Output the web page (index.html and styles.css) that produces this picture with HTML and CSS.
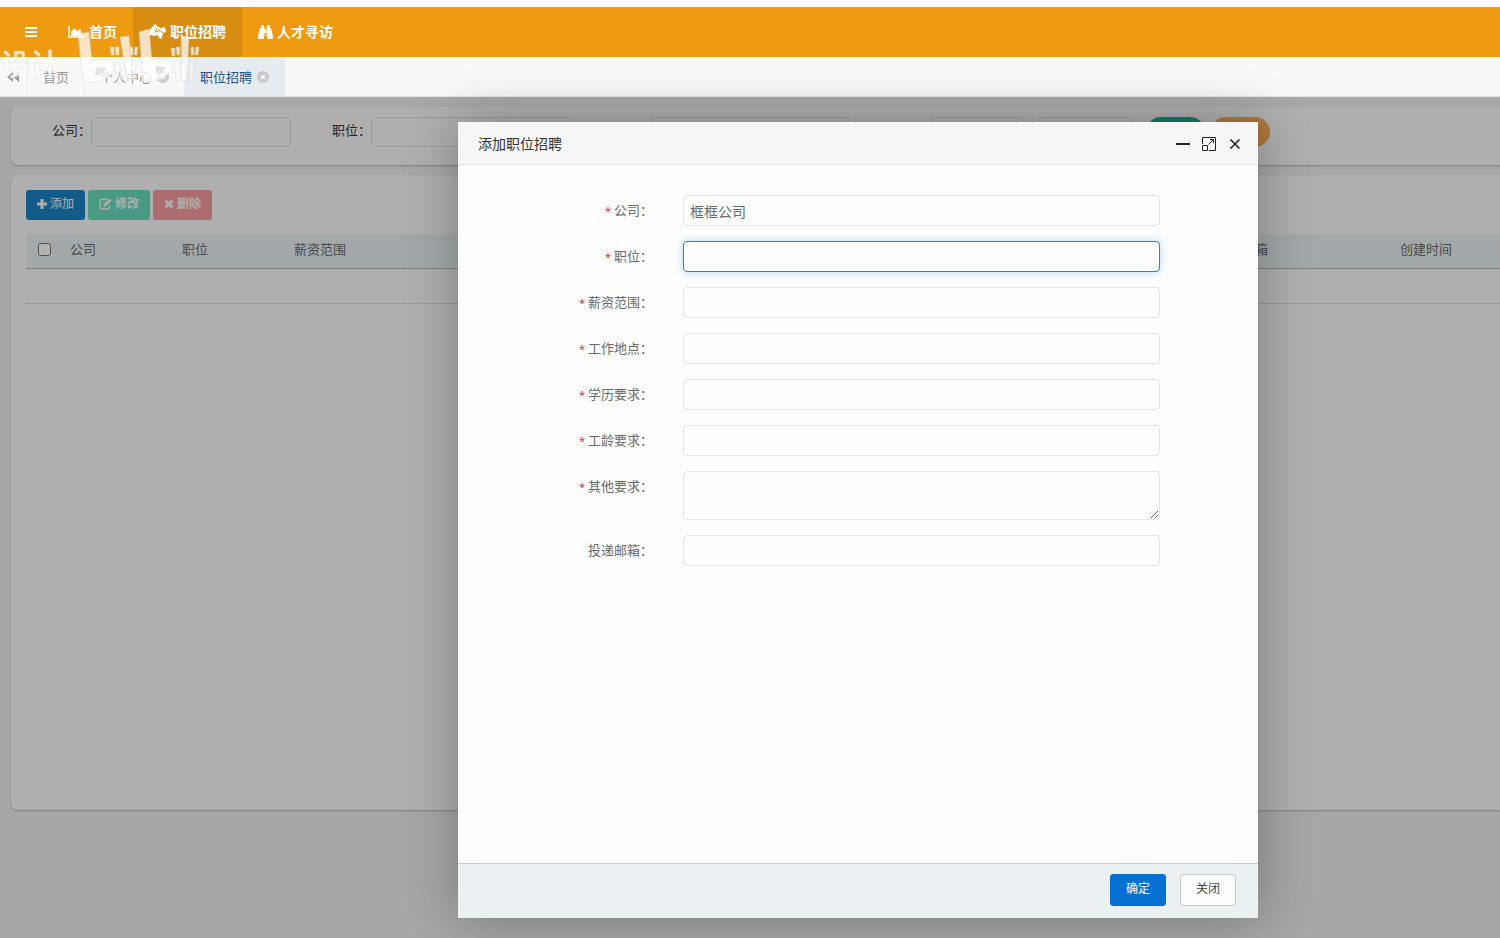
FILE: index.html
```html
<!DOCTYPE html>
<html lang="zh-CN">
<head>
<meta charset="utf-8">
<title>职位招聘</title>
<link rel="stylesheet" href="styles.css">
</head>
<body>
<header class="topbar">
  <button class="menu-toggle" type="button" aria-label="菜单">
    <svg width="13" height="12" viewBox="0 0 13 12"><path d="M1 2h12M1 6h12M1 10h12" stroke="currentColor" stroke-width="2"/></svg>
  </button>
  <nav class="main-nav">
    <a class="nav-item" href="#home">
      <svg width="17" height="14" viewBox="0 0 17 14"><path d="M1 1v11h15" fill="none" stroke="currentColor" stroke-width="1.4"/><path d="M3 11V7l3-4 3 3 3-2 3 7z" fill="currentColor"/></svg>
      首页</a>
    <a class="nav-item active" href="#jobs">
      <svg width="17" height="16" viewBox="0 0 17 16"><path d="M3 3l3-3 3 3 3 1 4-1 1 5-3 1-1 5-2 1-3-4-3 1-3-1-3 2-2-3 3-3z" fill="currentColor"/><path d="M8 4L6 7l2 1 2-2 4 3" fill="none" stroke="#d78c12" stroke-width="1"/></svg>
      职位招聘</a>
    <a class="nav-item" href="#talent">
      <svg width="15" height="14" viewBox="0 0 15 14"><path d="M3 0h3v2h.5v9.500H6V14H0v-3L2 3h1zM12 0H9v2h-.5v9.500H9V14h6v-3L13 3h-1zM6 4h3v4H6z" fill="currentColor"/></svg>
      人才寻访</a>
  </nav>
</header>
<div class="tabs">
  <button class="tab-scroll" type="button" aria-label="向左滚动">
    <svg width="12" height="10" viewBox="0 0 12 10"><path d="M6 0v10L0 5zM12 0v10L6 5z" fill="currentColor"/></svg>
  </button>
  <a class="tab" href="#home">首页</a>
  <a class="tab tab-wide" href="#profile">个人中心
    <svg width="12" height="12" viewBox="0 0 12 12"><circle cx="6" cy="6" r="6" fill="#ccc"/><path d="M4 4l4 4M8 4l-4 4" stroke="#fff" stroke-width="1.500"/></svg></a>
  <a class="tab tab-wide active" href="#jobs">职位招聘
    <svg width="12" height="12" viewBox="0 0 12 12"><circle cx="6" cy="6" r="6" fill="#c3c9cc"/><path d="M4 4l4 4M8 4l-4 4" stroke="#fff" stroke-width="1.500"/></svg></a>
</div>
<main class="content">
  <form class="panel search">
    <label class="field">公司：<input class="search-input" type="text"></label>
    <label class="field">职位：<input class="search-input" type="text"></label>
    <input class="search-input third" type="text" aria-label="工作地点">
    <span class="range">
      <input class="search-input date" type="text" aria-label="开始时间">
      <input class="search-input date" type="text" aria-label="结束时间">
    </span>
    <span class="range actions">
      <button class="pill green" type="button" aria-label="搜索"></button>
      <button class="pill orange" type="button" aria-label="重置"></button>
    </span>
  </form>
  <section class="panel list">
    <div class="toolbar">
      <button class="tool blue" type="button"><svg width="10" height="10" viewBox="0 0 10 10"><path d="M5 0v10M0 5h10" stroke="currentColor" stroke-width="3"/></svg>添加</button>
      <button class="tool teal" type="button"><svg width="13" height="12" viewBox="0 0 13 12"><path d="M8 1.500H2.500a1.500 1.500 0 0 0-1.500 1.500v6.500A1.500 1.500 0 0 0 2.500 11H9a1.500 1.500 0 0 0 1.500-1.500V7.500" fill="none" stroke="currentColor" stroke-width="1.300"/><path d="M4.500 6.500L10.500.5l2 2-6 6h-2z" fill="currentColor"/></svg>修改</button>
      <button class="tool red" type="button"><svg width="10" height="10" viewBox="0 0 10 10"><path d="M1.500 1.500l7 7M8.500 1.500l-7 7" stroke="currentColor" stroke-width="3"/></svg>删除</button>
    </div>
    <table class="grid">
      <colgroup><col class="c-check"><col class="c-short"><col class="c-short"><col class="c-first"><col class="c-long"><col class="c-long"><col class="c-long"><col class="c-long"><col class="c-long"><col></colgroup>
      <thead><tr>
        <th><input class="check" type="checkbox" aria-label="全选"></th>
        <th>公司</th><th>职位</th><th>薪资范围</th><th>工作地点</th><th>学历要求</th><th>工龄要求</th><th>其他要求</th><th>投递邮箱</th><th>创建时间</th>
      </tr></thead>
      <tbody><tr><td colspan="10"></td></tr></tbody>
    </table>
  </section>
  <div class="shade"></div>
</main>
<div class="watermark" aria-hidden="true">
  <span class="mark-text">设计</span>
  <svg class="mark-logo" width="124" height="58" viewBox="0 0 124 58">
    <g fill="#fff" stroke="#d4d4d4" stroke-width=".6">
      <path d="M1 5l11-2 3 29c12-4 23-2 22 7-1 9-13 15-29 15H6z"/>
      <path d="M43 8l9-1 4 43-6 2zM104 7l8 1-2 43-5 1z"/>
      <path d="M62 3l10-3 3 31c11-4 21-1 20 7-1 8-12 14-24 15h-5z"/>
      <path d="M33 18h4v8h-3zM38 18h4v8h-3zM53 18h3v8h-3zM58 18h3l-1 8h-3zM94 19h4v8h-3zM99 18h4v8h-3zM114 18h3v8h-3zM119 18h3l-1 8h-3z"/>
      <g opacity=".6"><path d="M38 32l4-1 3 20-4 1zM54 31l4 1 1 19-4 1zM98 32l4-1 1 20-4 1zM113 32h4l-1 19h-4z"/></g>
    </g>
    <path d="M19 38l10 1c0 4-5 7-11 8zM79 37l9 1c0 4-4 6-9 7z" fill="#ddd"/>
  </svg>
</div>
<div class="dialog-layer">
<form class="dialog" role="dialog" aria-labelledby="dialog-title">
  <header class="dialog-head">
    <h2 class="dialog-title" id="dialog-title">添加职位招聘</h2>
    <button class="win" type="button" aria-label="最小化"><svg width="14" height="14" viewBox="0 0 14 14"><path d="M0 7h14" stroke="currentColor" stroke-width="2"/></svg></button>
    <button class="win" type="button" aria-label="最大化"><svg width="14" height="14" viewBox="0 0 14 14" fill="none" stroke="currentColor"><path d="M.5 7V.5h13v13H7M.5 8.500h5v5h-5zM6.500 7.500l5-5M8 2.500h3.500V6"/></svg></button>
    <button class="win" type="button" aria-label="关闭窗口"><svg width="14" height="14" viewBox="0 0 14 14"><path d="M2.500 2.500l9 9M11.500 2.500l-9 9" stroke="currentColor" stroke-width="1.600"/></svg></button>
  </header>
  <div class="dialog-body">
    <div class="row"><label class="label required" for="company">公司：</label><input class="control" id="company" type="text" value="框框公司"></div>
    <div class="row"><label class="label required" for="job">职位：</label><input class="control current" id="job" type="text"></div>
    <div class="row"><label class="label required" for="salary">薪资范围：</label><input class="control" id="salary" type="text"></div>
    <div class="row"><label class="label required" for="place">工作地点：</label><input class="control" id="place" type="text"></div>
    <div class="row"><label class="label required" for="degree">学历要求：</label><input class="control" id="degree" type="text"></div>
    <div class="row"><label class="label required" for="years">工龄要求：</label><input class="control" id="years" type="text"></div>
    <div class="row"><label class="label required" for="other">其他要求：</label><textarea class="control area" id="other"></textarea></div>
    <div class="row"><label class="label" for="mail">投递邮箱：</label><input class="control" id="mail" type="text"></div>
  </div>
  <footer class="dialog-foot">
    <button class="btn primary" type="button">确定</button>
    <button class="btn" type="button">关闭</button>
  </footer>
</form>
</div>
</body>
</html>
```
FILE: styles.css
```css
* { box-sizing: border-box; }

body {
  margin: 0;
  height: 100vh;
  padding-top: 7px;
  display: flex;
  flex-direction: column;
  position: relative;
  overflow: hidden;
  background: #fdfdfd;
  color: #676a6c;
  font: 13px/20px "Open Sans", "Noto Sans CJK SC", sans-serif;
}

button, input, textarea { font: inherit; color: inherit; }
button { border: 0; padding: 0; background: none; }
a { color: inherit; text-decoration: none; }

.topbar {
  flex: none;
  display: flex;
  height: 50px;
  padding-left: 24px;
  background: #ef9b12;
  color: #fff;
}
.menu-toggle { width: 28px; text-align: left; }
.menu-toggle svg { display: block; }
.main-nav { display: flex; }
.nav-item {
  display: flex;
  align-items: center;
  gap: 4px;
  padding: 0 16px;
  font-size: 14px;
  font-weight: 700;
}
.nav-item.active { background: #d78c12; }

.tabs {
  flex: none;
  display: flex;
  height: 40px;
  background: #f8f8f8;
  border-bottom: 1px solid #e0e2e2;
  color: #999;
}
.tab-scroll { width: 28px; padding-left: 7px; border-right: 1px solid #e8e8e8; text-align: left; }
.tab-scroll svg { display: block; }
.tab {
  display: flex;
  align-items: center;
  gap: 5px;
  padding: 0 15px;
  border-right: 1px solid #eee;
}
.tab-wide { width: 100px; }
.tab.active { background: #e5ebee; color: #23508e; border: 0; }

.content {
  flex: 1;
  position: relative;
  padding: 10px 0 0 11px;
  background: #f0f0f0;
  overflow: hidden;
}
.shade { position: absolute; inset: 0; background: rgba(0, 0, 0, .3); }

.panel {
  background: #fbfbfb;
  border-radius: 6px 0 0 6px;
  box-shadow: 0 1px 2px rgba(0, 0, 0, .25);
}
.search {
  display: flex;
  align-items: flex-start;
  height: 58px;
  padding: 10px 0 0 41px;
  margin-bottom: 10px;
  color: #333;
}
.field { display: flex; line-height: 26px; margin-right: 41px; }
.search-input {
  width: 200px;
  height: 30px;
  border: 1px solid #ddd;
  border-radius: 4px;
  background: transparent;
}
.third { margin: 0 80px 0 38px; }
.range { display: flex; gap: 14px; }
.date { width: 94px; }
.actions { gap: 6px; margin-left: 14px; }
.pill { width: 59px; height: 30px; border-radius: 15px; }
.green { background: #1ab394; }
.orange { background: #f8ac59; }

.list { height: 635px; padding: 15px 0 0 15px; }
.toolbar { display: flex; gap: 3px; margin-bottom: 14px; }
.tool {
  display: flex;
  align-items: center;
  gap: 3px;
  height: 30px;
  padding: 0 11px 2px;
  border-radius: 3px;
  color: #fafafa;
  font-size: 12px;
}
.blue { background: #1c84c6; }
.teal { background: #6bdcbe; font-weight: 700; }
.red { background: #f69ca2; font-weight: 700; }

.grid { width: 100%; border-collapse: collapse; table-layout: fixed; }
.c-check { width: 36px; }
.c-short { width: 112px; }
.c-first { width: 186px; }
.c-long { width: 184px; }
.grid th {
  height: 34px;
  padding: 0 8px 3px;
  background: #eaf2f4;
  border-bottom: 1px solid #bbb;
  text-align: left;
  font-weight: 400;
}
.grid td { height: 35px; border-bottom: 1px solid #ddd; }
.check { display: block; width: 13px; height: 13px; margin: 0 0 0 4px; }

.watermark {
  position: absolute;
  top: 29px;
  left: 0;
  display: flex;
  opacity: .75;
  pointer-events: none;
  color: #fff;
}
.mark-text { width: 77px; padding-top: 15px; font-size: 30px; line-height: 40px; font-weight: 500; text-shadow: 0 0 1px #ccc; }

.dialog-layer {
  position: absolute;
  inset: 122px 0 20px;
  display: flex;
  justify-content: center;
  padding-left: 216px;
  pointer-events: none;
}
.dialog {
  width: 800px;
  display: flex;
  flex-direction: column;
  background: #fdfdfd;
  box-shadow: 1px 1px 50px rgba(0, 0, 0, .3);
  pointer-events: auto;
}
.dialog-head {
  display: flex;
  align-items: center;
  gap: 12px;
  height: 43px;
  padding: 2px 16px 0 20px;
  background: #f6f6f6;
  border-bottom: 1px solid #e8e8e8;
  color: #222;
}
.dialog-title { flex: 1; margin: 0; font-size: 14px; line-height: 20px; font-weight: 400; color: #333; }
.win { width: 14px; height: 14px; }
.win svg { display: block; }
.dialog-body {
  flex: 1;
  display: flex;
  flex-direction: column;
  gap: 15px;
  padding: 30px 98px 0 100px;
}
.row { display: flex; gap: 30px; }
.label { width: 95px; padding-top: 5px; text-align: right; white-space: nowrap; }
.required::before { content: "* "; color: #e02020; font-size: 11px; }
.control {
  flex: 1;
  min-width: 0;
  height: 31px;
  padding: 0 6px;
  border: 1px solid #e2e4e6;
  border-radius: 4px;
  background: #fdfdfd;
  font-size: 14px;
  outline: none;
}
.current { border-color: #3b82ad; box-shadow: 0 0 8px rgba(102, 175, 233, .5); }
.area { height: 49px; resize: vertical; display: block; }
.dialog-foot {
  display: flex;
  justify-content: flex-end;
  gap: 14px;
  padding: 10px 22px 12px;
  background: #ebf1f2;
  border-top: 1px solid #c4caca;
}
.btn {
  width: 56px;
  height: 32px;
  padding-bottom: 2px;
  border: 1px solid #c3c9cc;
  border-radius: 3px;
  background: #fdfdfd;
  color: #444;
  font-size: 12px;
}
.primary { background: #0670d2; border-color: #0670d2; color: #fff; }
```
